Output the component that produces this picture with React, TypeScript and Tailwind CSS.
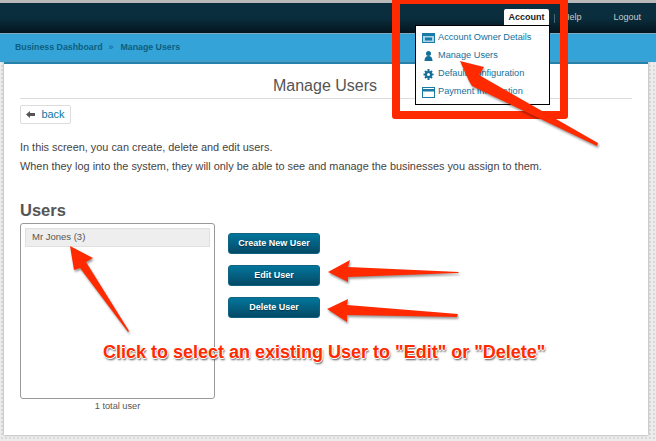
function CardIcon() {
  return (
    <svg width="13" height="10" viewBox="0 0 13 10" className="shrink-0">
      <rect width="13" height="10" fill="#1a7aa6" />
      <rect x="1" y="3" width="11" height="6" fill="#a9d3e6" />
      <rect x="3" y="4.5" width="7" height="3" fill="#1a7aa6" />
    </svg>
  );
}

function UserIcon() {
  return (
    <svg width="13" height="10" viewBox="0 0 13 10" className="shrink-0">
      <circle cx="6.5" cy="2.5" r="2.5" fill="#14709b" />
      <path d="M2.5 10 C2.5 6.5 4 5 6.5 5 C9 5 10.5 6.5 10.5 10 Z" fill="#14709b" />
    </svg>
  );
}

function GearIcon() {
  return (
    <svg width="13" height="11" viewBox="0 0 13 11" className="shrink-0">
      <g stroke="#14709b" strokeWidth="2">
        <path d="M6.5 0 V11 M1.5 5.5 H11.5 M3 2 L10 9 M10 2 L3 9" />
      </g>
      <circle cx="6.5" cy="5.5" r="3.6" fill="#14709b" />
      <circle cx="6.5" cy="5.5" r="1.5" fill="#fff" />
    </svg>
  );
}

function PaymentIcon() {
  return (
    <svg width="13" height="11" viewBox="0 0 13 11" className="shrink-0">
      <rect x="0.5" y="0.5" width="12" height="10" fill="#fff" stroke="#1a7aa6" />
      <rect x="1" y="2" width="11" height="2.5" fill="#1a7aa6" />
    </svg>
  );
}

const menuItems = [
  { label: "Account Owner Details", icon: <CardIcon /> },
  { label: "Manage Users", icon: <UserIcon /> },
  { label: "Default Configuration", icon: <GearIcon /> },
  { label: "Payment Information", icon: <PaymentIcon /> },
];

function ActionButton({ label }: { label: string }) {
  return (
    <button className="h-[21px] w-[92px] rounded-[3px] border border-[#0f6280] bg-gradient-to-b from-[#02769c] to-[#044a66] text-[9px] font-bold text-white [text-shadow:0_1px_1px_#00324a]">
      {label}
    </button>
  );
}

export default function App() {
  return (
    <div className="relative h-[441px] w-[656px] overflow-hidden bg-[#ececec] bg-[radial-gradient(#d9d9d9_1px,transparent_1px)] bg-[length:4px_4px] font-['Liberation_Sans',Arial,sans-serif] text-[#444]">
      <div className="h-[3px] bg-[#b9b9b9]" />
      <header className="flex h-[30px] items-center justify-end bg-gradient-to-b from-[#0a2e3d] via-[#0a2e3d] to-[#04151e] pr-[15px] text-[9px] text-[#c9c9c9]">
        <span className="mr-[8px] h-[9px] w-px bg-[#4a6674]" />
        <span className="mr-[32px]">Help</span>
        <span>Logout</span>
      </header>
      <nav className="flex h-[29px] items-center gap-[6px] border-t border-[#7fa9bc] bg-[#34a3d8] pl-[15px] text-[8.8px] font-bold text-[#0c5f80]">
        <span>Business Dashboard</span>
        <span className="font-normal">»</span>
        <span className="ml-[1px]">Manage Users</span>
      </nav>

      <main className="ml-[4px] h-[373px] w-[644px] border-t-2 border-[#2383ad] bg-white px-[16px] shadow-[0_0_2px_#888]">
        <h1 className="flex h-[35px] items-end justify-center border-b border-[#ddd] pr-[2px] text-[16px] text-[#555]">
          Manage Users
        </h1>
        <button className="mt-[6px] flex h-[19px] w-[51px] items-center justify-center gap-[6px] rounded-[2px] border border-[#ddd] text-[11px] text-[#0d76a3]">
          <svg width="9" height="7" viewBox="0 0 9 7">
            <path d="M0 3.5 L4 0 V2 H9 V5 H4 V7 Z" fill="#555" />
          </svg>
          back
        </button>
        <p className="mt-[14px] text-[10.9px] leading-[19px] text-[#444]">
          In this screen, you can create, delete and edit users.
          <br />
          When they log into the system, they will only be able to see and manage the businesses you assign to them.
        </p>
        <h2 className="mt-[25px] text-[16.5px] leading-[18px] font-bold text-[#555]">Users</h2>
        <div className="mt-[4px] flex gap-[13px]">
          <div className="w-[195px]">
            <div className="h-[176px] rounded-[3px] border border-[#999] p-[4px]">
              <div className="flex h-[19px] items-center border border-[#e0e0e0] bg-[#eee] pl-[6px] text-[9.5px] text-[#555]">
                Mr Jones (3)
              </div>
            </div>
            <p className="mt-[1px] text-center text-[9.2px] text-[#555]">1 total user</p>
          </div>
          <div className="mt-[10px] flex flex-col gap-[11px]">
            <ActionButton label="Create New User" />
            <ActionButton label="Edit User" />
            <ActionButton label="Delete User" />
          </div>
        </div>
      </main>

      {/* open account menu */}
      <div className="absolute top-[9px] left-[504px] flex h-[17px] w-[45px] items-center justify-center rounded-t-[2px] bg-white text-[9px] font-bold text-[#222]">
        Account
      </div>
      <div className="absolute top-[25px] left-[415px] flex h-[80px] w-[135px] flex-col justify-center gap-[7px] border border-black bg-white pl-[6px] text-[9.2px] text-[#14709b]">
        {menuItems.map((item) => (
          <div key={item.label} className="flex h-[11px] items-center gap-[3px]">
            {item.icon}
            <span>{item.label}</span>
          </div>
        ))}
      </div>

      {/* annotations */}
      <div className="absolute top-[-4px] left-[392px] h-[123px] w-[176px] rounded-[3px] border-[8px] border-[#ff2a00]" />
      <svg width="656" height="441" viewBox="0 0 656 441" className="absolute top-0 left-0 drop-shadow-[1px_2px_1px_rgba(0,0,0,0.4)]">
        <g fill="#ff2a00">
          <path d="M460 61 L484 67 L479 75 L598 143 L597 146 L472 86 L469 81 Z" />
          <path d="M70 246 L93 258 L86 262 L129 331 L128 332 L80 268 L74 270 Z" />
          <path d="M328 272 L350 260 L348 267 L459 272 L458 273 L348 277 L348 282 Z" />
          <path d="M327 309 L348 299 L347 305 L458 314 L457 317 L347 315 L347 322 Z" />
        </g>
      </svg>
      <div className="absolute top-[343px] left-[103px] whitespace-nowrap text-[18px] leading-[18px] font-bold text-[#ff2a00] [text-shadow:1px_0_0_#fff,-1px_0_0_#fff,0_1px_0_#fff,0_-1px_0_#fff,1px_2px_2px_#555]">
        Click to select an existing User to "Edit" or "Delete"
      </div>
    </div>
  );
}
